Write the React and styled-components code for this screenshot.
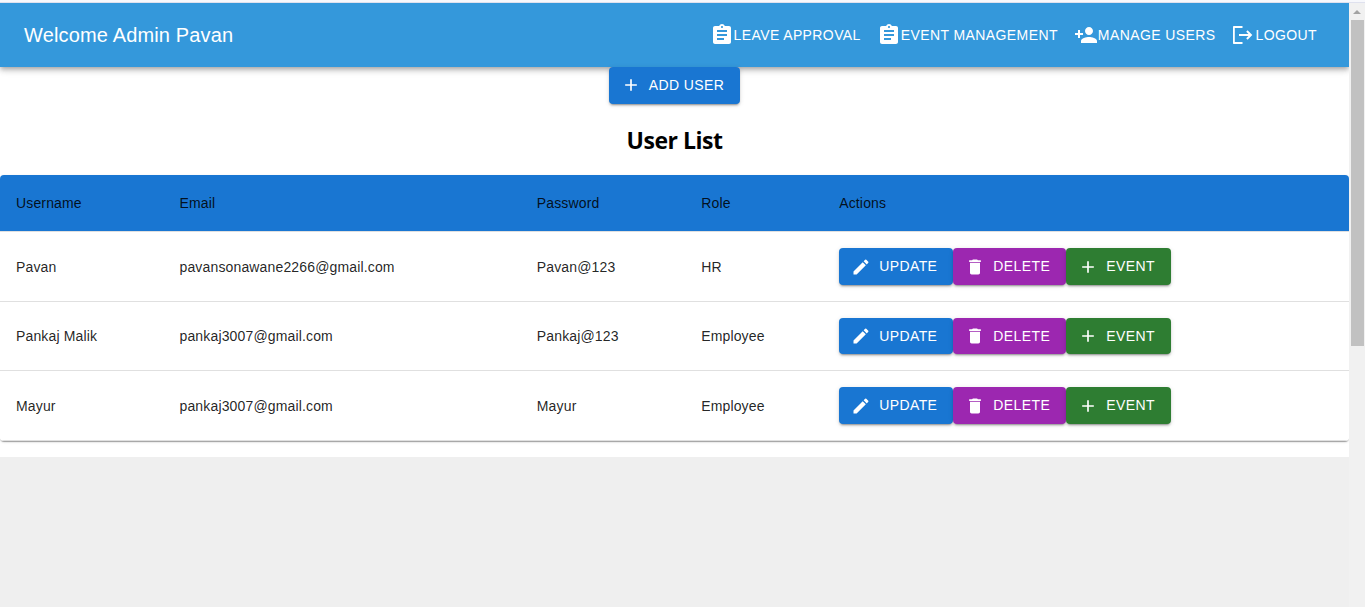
import React from "react";
import styled, { createGlobalStyle } from "styled-components";

const GlobalStyle = createGlobalStyle`
  * { box-sizing: border-box; }
  body {
    margin: 0;
    background: #efefef;
    font-family: "Liberation Sans", Arial, Helvetica, sans-serif;
    overflow: hidden;
  }
`;

const Window = styled.div`
  display: flex;
  flex-direction: column;
  height: 607px;
`;

const TopEdge = styled.div`
  flex: none;
  height: 3px;
  background: #f7f8fc;
  border-bottom: 1px solid #dfe1ee;
`;

const Viewport = styled.div`
  display: flex;
  flex: 1;
  min-height: 0;
`;

const Page = styled.div`
  flex: 1;
  min-width: 0;
  overflow: hidden;
`;

const Content = styled.main`
  display: flex;
  flex-direction: column;
  align-items: center;
  height: 390px;
  background: #fff;
`;

const AppBar = styled.header`
  display: flex;
  align-items: center;
  justify-content: space-between;
  height: 64px;
  padding: 0 24px;
  color: #fff;
  background: #3498db;
  box-shadow: 0 2px 4px -1px rgba(0, 0, 0, 0.2), 0 4px 5px 0 rgba(0, 0, 0, 0.14),
    0 1px 10px 0 rgba(0, 0, 0, 0.12);
  position: relative;
`;

const Title = styled.div`
  font-size: 20px;
  line-height: 32px;
  letter-spacing: 0.15px;
`;

const Nav = styled.nav`
  display: flex;
`;

const NavButton = styled.button`
  display: flex;
  align-items: center;
  padding: 6px 8px;
  border: 0;
  background: none;
  color: inherit;
  font: 14px/24.5px "Liberation Sans", Arial, sans-serif;
  letter-spacing: 0.4px;
  text-transform: uppercase;
  white-space: nowrap;
`;

const Button = styled.button`
  display: inline-flex;
  align-items: center;
  height: 36.5px;
  padding: 6px 16px 6px 12px;
  gap: 8px;
  border: 0;
  border-radius: 4px;
  color: #fff;
  background: ${(p) => p.$color};
  box-shadow: 0 3px 1px -2px rgba(0, 0, 0, 0.2), 0 2px 2px 0 rgba(0, 0, 0, 0.14),
    0 1px 5px 0 rgba(0, 0, 0, 0.12);
  font: 14px/24.5px "Liberation Sans", Arial, sans-serif;
  letter-spacing: 0.4px;
  text-transform: uppercase;
  white-space: nowrap;
  position: relative;
`;

const Svg = styled.svg`
  display: block;
  flex: none;
  width: ${(p) => p.$size}px;
  height: ${(p) => p.$size}px;
  fill: currentColor;
`;

const Heading = styled.h2`
  margin: 20.92px 0 18.92px;
  font: 700 23px/32px "Open Sans", "Noto Sans", sans-serif;
  letter-spacing: -0.5px;
  color: #000;
`;

const Paper = styled.div`
  flex: none;
  width: 100%;
  border-radius: 4px;
  background: #fff;
  overflow: hidden;
  box-shadow: 0 2px 1px -1px rgba(0, 0, 0, 0.2), 0 1px 1px 0 rgba(0, 0, 0, 0.14),
    0 1px 3px 0 rgba(0, 0, 0, 0.12);
`;

const Row = styled.div`
  display: grid;
  grid-template-columns: 163.5px 357.3px 164.4px 138px 1fr;
  align-items: center;
  height: ${(p) => (p.$head ? 57 : 69.5)}px;
  border-bottom: 1px solid #e0e0e0;
  background: ${(p) => (p.$head ? "#1976d2" : "#fff")};
`;

const Cell = styled.div`
  padding: 0 16px;
  font-size: 14px;
  line-height: 20px;
  letter-spacing: 0.15px;
  color: rgba(0, 0, 0, 0.87);
  white-space: nowrap;
`;

const Actions = styled(Cell)`
  display: flex;
`;

const Scrollbar = styled.div`
  flex: none;
  display: flex;
  flex-direction: column;
  align-items: center;
  width: 16px;
  background: #f1f1f1;
`;

const ScrollArrow = styled.div`
  width: 0;
  height: 0;
  margin: 7px 0 6px;
  border: 4px solid transparent;
  border-top: 0;
  border-bottom-color: #a3a3a3;
`;

const ScrollThumb = styled.div`
  width: 13px;
  height: 326px;
  background: #c1c1c1;
`;

const paths = {
  clipboard:
    "M19 3h-4.18C14.4 1.84 13.3 1 12 1c-1.3 0-2.4.84-2.82 2H5c-1.1 0-2 .9-2 2v14c0 1.1.9 2 2 2h14c1.1 0 2-.9 2-2V5c0-1.1-.9-2-2-2m-7 0c.55 0 1 .45 1 1s-.45 1-1 1-1-.45-1-1 .45-1 1-1m2 14H7v-2h7zm3-4H7v-2h10zm0-4H7V7h10z",
  person:
    "M15 12c2.21 0 4-1.79 4-4s-1.79-4-4-4-4 1.79-4 4 1.79 4 4 4m-9-2V7H4v3H1v2h3v3h2v-3h3v-2zm9 4c-2.67 0-8 1.34-8 4v2h16v-2c0-2.66-5.33-4-8-4",
  logout:
    "M11.5 3H3c-.6 0-1 .4-1 1v16c0 .6.4 1 1 1h8.5v-2H3.8V5h7.7zM16.6 7.3l-1.4 1.4 2.3 2.3H8v2h9.5l-2.3 2.3 1.4 1.4 4.7-4.7z",
  add: "M19 13h-6v6h-2v-6H5v-2h6V5h2v6h6z",
  edit:
    "M3 17.25V21h3.75L17.81 9.94l-3.75-3.75zM20.71 7.04c.39-.39.39-1.02 0-1.41l-2.34-2.34a.9959.9959 0 0 0-1.41 0l-1.83 1.83 3.75 3.75z",
  delete: "M6 19c0 1.1.9 2 2 2h8c1.1 0 2-.9 2-2V7H6zM19 4h-3.5l-1-1h-5l-1 1H5v2h14z",
};

const Icon = ({ name, size = 20 }) => (
  <Svg $size={size} viewBox="0 0 24 24" aria-hidden="true">
    <path d={paths[name]} />
  </Svg>
);

const links = [
  ["clipboard", "Leave Approval"],
  ["clipboard", "Event Management"],
  ["person", "Manage Users"],
  ["logout", "Logout"],
];

const users = [
  ["Pavan", "pavansonawane2266@gmail.com", "Pavan@123", "HR"],
  ["Pankaj Malik", "pankaj3007@gmail.com", "Pankaj@123", "Employee"],
  ["Mayur", "pankaj3007@gmail.com", "Mayur", "Employee"],
];

export default function App() {
  return (
    <>
      <GlobalStyle />
      <Window>
        <TopEdge />
        <Viewport>
          <Page>
            <AppBar>
              <Title>Welcome Admin Pavan</Title>
              <Nav>
                {links.map(([icon, label]) => (
                  <NavButton key={label}>
                    <Icon name={icon} size={24} />
                    {label}
                  </NavButton>
                ))}
              </Nav>
            </AppBar>
            <Content>
              <Button $color="#1976d2">
                <Icon name="add" />
                Add User
              </Button>
              <Heading>User List</Heading>
              <Paper>
                <Row $head>
                  {["Username", "Email", "Password", "Role", "Actions"].map((h) => (
                    <Cell key={h}>{h}</Cell>
                  ))}
                </Row>
                {users.map((user) => (
                  <Row key={user[0]}>
                    {user.map((value) => (
                      <Cell key={value}>{value}</Cell>
                    ))}
                    <Actions>
                      <Button $color="#1976d2">
                        <Icon name="edit" />
                        Update
                      </Button>
                      <Button $color="#9c27b0">
                        <Icon name="delete" />
                        Delete
                      </Button>
                      <Button $color="#2e7d32">
                        <Icon name="add" />
                        Event
                      </Button>
                    </Actions>
                  </Row>
                ))}
              </Paper>
            </Content>
          </Page>
          <Scrollbar>
            <ScrollArrow />
            <ScrollThumb />
          </Scrollbar>
        </Viewport>
      </Window>
    </>
  );
}
